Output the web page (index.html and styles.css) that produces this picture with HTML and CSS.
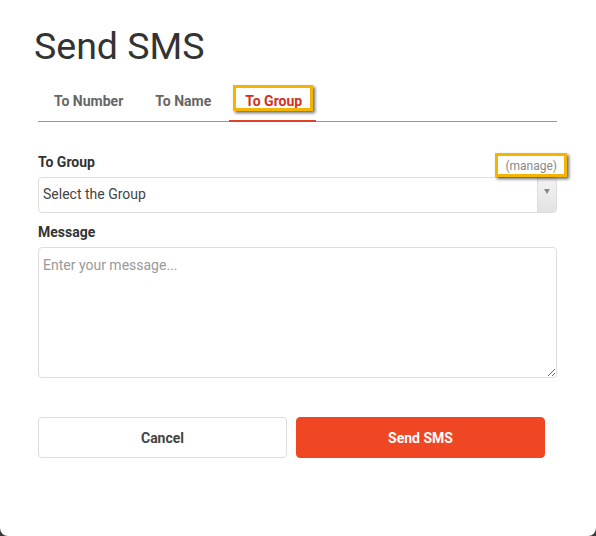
FILE: index.html
```html
<!DOCTYPE html>
<html lang="en">
<head>
    <meta charset="UTF-8">
    <meta name="viewport" content="width=device-width, initial-scale=1.0">
    <title>Send SMS</title>
    <link rel="stylesheet" href="styles.css">
</head>
<body>
    <div class="modal">
        <h1 class="modal-title">Send SMS</h1>

        <div class="tabs">
            <div class="tab">To Number</div>
            <div class="tab">To Name</div>
            <div class="tab active"><span class="mark mark-tab">To Group</span></div>
        </div>

        <div class="form">
            <div class="label-row">
                <label class="field-label">To Group</label>
                <span class="manage"><span class="mark mark-manage">(manage)</span></span>
            </div>
            <div class="select">
                <span class="select-text">Select the Group</span>
                <span class="select-arrow"><span class="caret"></span></span>
            </div>

            <label class="field-label">Message</label>
            <textarea class="message" placeholder="Enter your message..."></textarea>

            <div class="actions">
                <button class="btn btn-cancel">Cancel</button>
                <button class="btn btn-send">Send SMS</button>
            </div>
        </div>
    </div>
</body>
</html>
```

FILE: styles.css
```css
body {
    margin: 0;
    padding: 0;
    background-color: #3a3a3a;
    font-family: Roboto, "Liberation Sans", Arial, sans-serif;
    overflow: hidden;
}
.modal {
    width: 596px;
    height: 536px;
    box-sizing: border-box;
    background-color: #fff;
    border-radius: 0 0 8px 8px;
    padding: 24px 39px 0 38px;
}
.modal-title {
    margin: 0 0 0 -4px;
    font-size: 37.5px;
    font-weight: 400;
    line-height: 44px;
    color: #333;
}
.tabs {
    display: flex;
    margin-top: 13px;
    border-bottom: 1px solid #999;
}
.tab {
    padding: 12px 16px 11px;
    font-size: 14px;
    font-weight: 700;
    line-height: 16px;
    color: #666;
    border-bottom: 2px solid transparent;
    margin-bottom: -1px;
}
.tab.active {
    color: #d2321d;
    border-bottom-color: #e0412a;
    margin-left: 2px;
    padding-right: 14px;
}
.mark {
    position: relative;
}
.mark::after {
    content: "";
    position: absolute;
    border: 3px solid #f5b400;
    box-shadow: 2px 2px 3px rgba(0, 0, 0, 0.6);
}
.mark-tab::after {
    left: -12px;
    right: -11px;
    top: -8px;
    bottom: -2px;
}
.mark-manage::after {
    left: -10px;
    right: -10px;
    top: -6px;
    bottom: -4px;
}
.form {
    padding-top: 32px;
}
.label-row {
    display: flex;
    justify-content: space-between;
    align-items: flex-end;
}
.field-label {
    display: block;
    font-size: 14px;
    font-weight: 700;
    line-height: 16px;
    color: #333;
    margin-bottom: 7px;
}
.manage {
    font-size: 12px;
    line-height: 14px;
    color: #888;
    margin-bottom: 4px;
}
.select {
    display: flex;
    height: 36px;
    box-sizing: border-box;
    border: 1px solid #ddd;
    border-radius: 4px;
    margin-bottom: 11px;
    overflow: hidden;
}
.select-text {
    flex: 1;
    padding-left: 4px;
    font-size: 14px;
    line-height: 33px;
    color: #444;
}
.select-arrow {
    width: 18px;
    display: flex;
    align-items: center;
    justify-content: center;
    border-left: 1px solid #ddd;
    background: linear-gradient(to bottom, #f4f4f4, #e2e2e2);
}
.caret {
    width: 0;
    height: 0;
    border-left: 3px solid transparent;
    border-right: 3px solid transparent;
    border-top: 5px solid #888;
    margin-top: -8px;
}
.message {
    display: block;
    width: 100%;
    height: 131px;
    box-sizing: border-box;
    border: 1px solid #ddd;
    border-radius: 4px;
    padding: 9px 4px;
    font-family: Roboto, "Liberation Sans", Arial, sans-serif;
    font-size: 14px;
    color: #444;
    margin: 0;
}
.message::placeholder {
    color: #999;
}
.actions {
    display: grid;
    grid-template-columns: 249px 249px;
    column-gap: 9px;
    margin-top: 39px;
}
.btn {
    height: 41px;
    border-radius: 4px;
    font-family: Roboto, "Liberation Sans", Arial, sans-serif;
    font-size: 14px;
    font-weight: 700;
    cursor: pointer;
}
.btn-cancel {
    background-color: #fff;
    border: 1px solid #ddd;
    color: #444;
}
.btn-send {
    background-color: #ef4623;
    border: 1px solid #ef4623;
    color: #fff;
}
```
